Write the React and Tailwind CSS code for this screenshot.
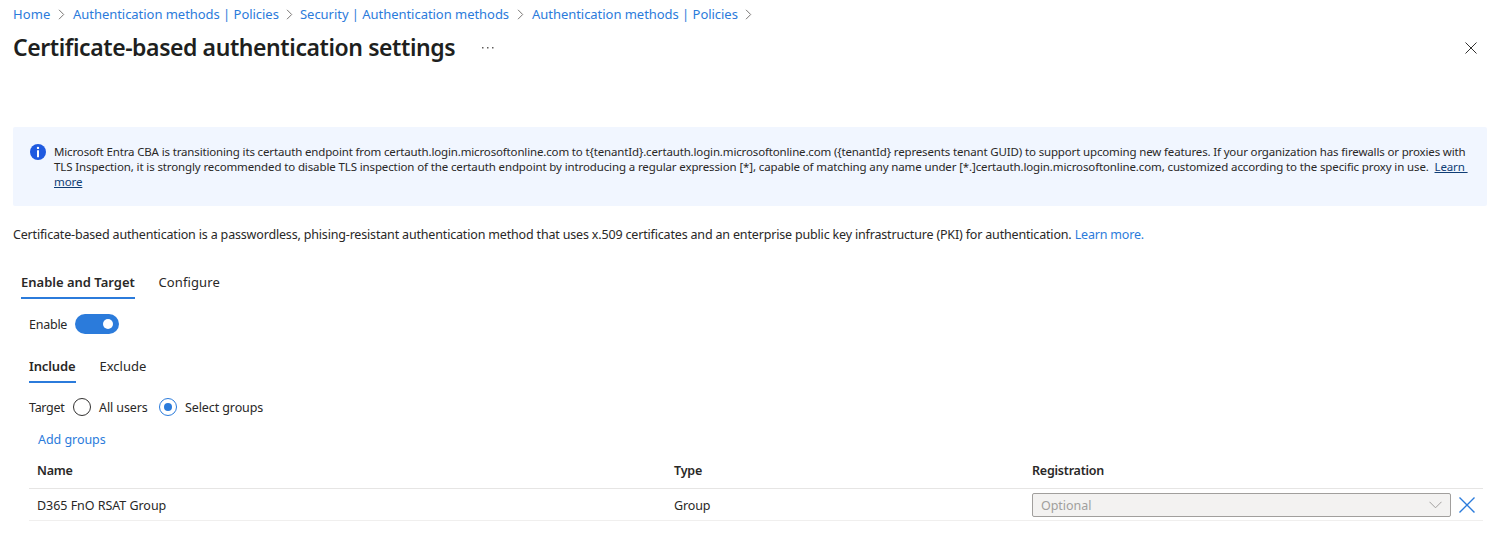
const Crumb = ({ children, className }) => (
  <a className={`block shrink-0 whitespace-nowrap text-[#2b7bdb] ${className}`}>{children}</a>
);

const Chevron = ({ className }) => (
  <svg className={`mt-px h-[11px] w-[7px] shrink-0 ${className}`} viewBox="0 0 7 11" fill="none" stroke="#797775" strokeWidth="1">
    <path d="M1 .8 5.7 5.5 1 10.2" />
  </svg>
);

const Cross = ({ className, size, color, width }) => (
  <svg className={className} width={size} height={size} viewBox={`0 0 ${size} ${size}`} fill="none" stroke={color} strokeWidth={width}>
    <path d={`M.5.5 ${size - 0.5} ${size - 0.5}M${size - 0.5}.5.5 ${size - 0.5}`} />
  </svg>
);

export default function App() {
  return (
    <main className="flex h-[538px] w-[1488px] flex-col overflow-hidden bg-white font-['Noto_Sans','Open_Sans',sans-serif] text-[12.5px] leading-[20px] text-[#292827]">
      <nav className="flex h-[28px] items-center pl-[13px] text-[13px] tracking-[-0.04px]">
        <Crumb className="w-[38px] tracking-[0.15px]">Home</Crumb>
        <Chevron className="ml-[7px] mr-[8px]" />
        <Crumb className="w-[206px]">Authentication methods | Policies</Crumb>
        <Chevron className="ml-[7px] mr-[7px]" />
        <Crumb className="w-[210px]">Security | Authentication methods</Crumb>
        <Chevron className="ml-[7px] mr-[8px]" />
        <Crumb className="w-[206px]">Authentication methods | Policies</Crumb>
        <Chevron className="ml-[7px]" />
      </nav>

      <header className="flex h-[40px] items-center pl-[13px] pr-[11px]">
        <h1 className="mb-[2px] w-[469px] whitespace-nowrap text-[23px] font-semibold tracking-[-0.42px] text-[#201f1e]">
          Certificate-based authentication settings
        </h1>
        <svg className="h-[2px] w-[12px]" viewBox="0 0 12 2" fill="#605e5c">
          <path d="M0 0h1.5v1.5H0zM5 0h1.5v1.5H5zM10 0h1.5v1.5H10z" />
        </svg>
        <Cross className="ml-auto" size={12} color="#323130" width={1} />
      </header>

      <section className="ml-[13px] mr-px mt-[59px] flex h-[79px] shrink-0 rounded-[2px] bg-[#f1f6ff] pl-[17px] pt-[17px]">
        <svg className="h-[16px] w-[16px] shrink-0" viewBox="0 0 16 16">
          <circle cx="8" cy="8" r="8" fill="#1f5ae0" />
          <circle cx="8" cy="3.9" r="1.2" fill="#fff" />
          <path d="M7 6.2h2v7H7z" fill="#fff" />
        </svg>
        <div className="ml-[8px] whitespace-nowrap text-[11.5px] leading-[15px]">
          <p className="tracking-[-0.15px]">
            Microsoft Entra CBA is transitioning its certauth endpoint from certauth.login.microsoftonline.com to t&#123;tenantId&#125;.certauth.login.microsoftonline.com (&#123;tenantId&#125; represents tenant GUID) to support upcoming new features. If your organization has firewalls or proxies with
          </p>
          <p className="tracking-[-0.123px]">
            TLS Inspection, it is strongly recommended to disable TLS inspection of the certauth endpoint by introducing a regular expression [*], capable of matching any name under [*.]certauth.login.microsoftonline.com, customized according to the specific proxy in use.&nbsp;{' '}
            <a className="text-[#0f3d75] underline">Learn&nbsp;</a>
          </p>
          <p className="tracking-[-0.1px]">
            <a className="text-[#0f3d75] underline">more</a>
          </p>
        </div>
      </section>

      <p className="mt-[19px] h-[20px] whitespace-nowrap pl-[13px] tracking-[-0.172px]">
        Certificate-based authentication is a passwordless, phising-resistant authentication method that uses x.509 certificates and an enterprise public key infrastructure (PKI) for authentication.{' '}
        <a className="text-[#2b7bdb]">Learn more.</a>
      </p>

      <div className="mt-[27px] flex h-[27px] shrink-0 gap-[24px] whitespace-nowrap pl-[21px] text-[13px]">
        <div className="w-[114px] border-b-2 border-[#2b7bdb] font-semibold">Enable and Target</div>
        <div className="-ml-[0.5px] tracking-[0.1px]">Configure</div>
      </div>

      <div className="mt-[15px] flex h-[20px] shrink-0 items-center pl-[29px]">
        <span className="w-[46px] pt-[2px] tracking-[-0.25px]">Enable</span>
        <span className="flex h-[20px] w-[44px] items-center justify-end rounded-full bg-[#2b7bdb] pr-[6px]">
          <span className="h-[10px] w-[10px] rounded-full bg-white" />
        </span>
      </div>

      <div className="mt-[22px] flex h-[27px] shrink-0 gap-[24px] whitespace-nowrap pl-[29px] text-[13px]">
        <div className="w-[47px] border-b-2 border-[#2b7bdb] font-semibold tracking-[-0.13px]">Include</div>
        <div className="-ml-[0.5px]">Exclude</div>
      </div>

      <div className="mt-[14px] flex h-[20px] shrink-0 items-center whitespace-nowrap pl-[29px]">
        <span className="w-[44px] pt-[2px] tracking-[-0.3px]">Target</span>
        <span className="h-[18px] w-[18px] rounded-full border border-[#323130]" />
        <span className="ml-[8px] w-[60px] pt-[2px] tracking-[-0.1px]">All users</span>
        <span className="flex h-[18px] w-[18px] items-center justify-center rounded-full border border-[#2b7bdb]">
          <span className="h-[8px] w-[8px] rounded-full bg-[#2b7bdb]" />
        </span>
        <span className="ml-[8px] pt-[2px] tracking-[-0.1px]">Select groups</span>
      </div>

      <a className="mt-[13px] h-[20px] pl-[38px] tracking-[-0.05px] text-[#2b7bdb]">Add groups</a>

      <div className="ml-[29px] mr-[5px] mt-[10px] shrink-0">
        <div className="grid h-[29px] grid-cols-[637px_358px_1fr] border-b border-[#e6e5e4] pl-[8px] pt-px font-semibold tracking-[-0.22px]">
          <span>Name</span>
          <span>Type</span>
          <span>Registration</span>
        </div>
        <div className="grid h-[32px] grid-cols-[637px_358px_1fr] items-center border-b border-[#f0efee] pl-[8px] tracking-[-0.04px]">
          <span className="pt-[2px]">D365 FnO RSAT Group</span>
          <span className="pt-[2px] tracking-[-0.15px]">Group</span>
          <div className="flex items-center">
            <div className="flex h-[24px] w-[419px] items-center justify-between rounded-[2px] border border-[#a19f9d] bg-[#f3f2f1] pl-[8px] pr-[8px] text-[#a19f9d]">
              <span className="pt-[2px]">Optional</span>
              <svg className="h-[8px] w-[13px]" viewBox="0 0 13 8" fill="none" stroke="#a19f9d">
                <path d="M.5.8 6.5 6.8 12.5.8" />
              </svg>
            </div>
            <Cross className="ml-[8px]" size={16} color="#2b7bdb" width={1.4} />
          </div>
        </div>
      </div>
    </main>
  );
}
